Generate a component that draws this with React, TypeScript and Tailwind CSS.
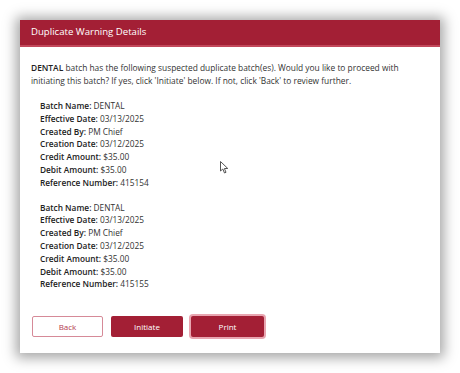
import React from "react";

const batches = [
  { name: "DENTAL", effective: "03/13/2025", by: "PM Chief", created: "03/12/2025", credit: "$35.00", debit: "$35.00", ref: "415154" },
  { name: "DENTAL", effective: "03/13/2025", by: "PM Chief", created: "03/12/2025", credit: "$35.00", debit: "$35.00", ref: "415155" },
];

function Row({ label, value }: { label: string; value: string }) {
  return (
    <div className="h-[12.8px] leading-[12.8px]">
      <span className="font-semibold text-[#222]">{label}:</span> {value}
    </div>
  );
}

export default function App() {
  return (
    <div
      className="w-[460px] h-[373px] bg-white p-[20px]"
      style={{ fontFamily: '"Open Sans", "Liberation Sans", sans-serif' }}
    >
      <div className="relative w-[420px] h-[333px] bg-white shadow-[0_1px_12px_4px_rgba(0,0,0,0.35)] flex flex-col">
        {/* header */}
        <div className="h-[27px] bg-[#a31f35] border-b-2 border-[#c2485b] flex items-center pl-[11px] text-white text-[9.6px]">
          Duplicate Warning Details
        </div>

        <div className="px-[11px] pt-[14px] text-[8.4px] leading-[13px] text-[#333]">
          <p>
            <span className="font-semibold text-[#222]">DENTAL</span> batch has the following suspected duplicate batch(es). Would you like to proceed with initiating this batch? If yes, click 'Initiate' below. If not, click 'Back' to review further.
          </p>

          <div className="pl-[9px] mt-[13px] flex flex-col gap-[12px] text-[8.3px]">
            {batches.map((b, i) => (
              <div key={i}>
                <Row label="Batch Name" value={b.name} />
                <Row label="Effective Date" value={b.effective} />
                <Row label="Created By" value={b.by} />
                <Row label="Creation Date" value={b.created} />
                <Row label="Credit Amount" value={b.credit} />
                <Row label="Debit Amount" value={b.debit} />
                <Row label="Reference Number" value={b.ref} />
              </div>
            ))}
          </div>

          <div className="flex gap-[8px] mt-[25px] ml-[1px] text-[8px]">
            <button className="w-[71px] h-[21px] border border-[#d68a98] rounded-[2px] text-[#b3394d] bg-white">
              Back
            </button>
            <button className="w-[72px] h-[21px] rounded-[2px] bg-[#a31f35] text-white">
              Initiate
            </button>
            <button className="w-[73px] h-[21px] rounded-[2px] bg-[#a31f35] text-white ring-2 ring-[#e8a5b0]">
              Print
            </button>
          </div>
        </div>

        {/* mouse cursor */}
        <svg className="absolute left-[200px] top-[141px]" width="9" height="13" viewBox="0 0 9 13">
          <path d="M0.5 0.5 L0.5 10 L2.8 8 L4.5 12 L6 11.3 L4.4 7.5 L7.8 7.5 Z" fill="white" stroke="#555" strokeWidth="1" strokeLinejoin="round" />
        </svg>
      </div>
    </div>
  );
}
